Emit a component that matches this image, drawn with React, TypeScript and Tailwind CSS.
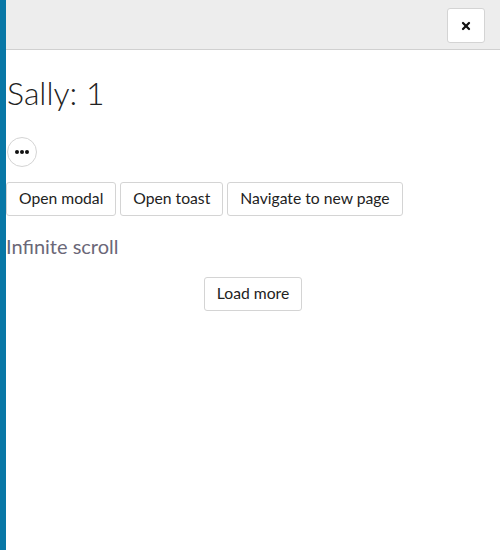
import { X } from "lucide-react";

const btn =
  "h-[34px] rounded-[3px] border border-[#d4d4d4] bg-white px-3 text-[15.7px] text-[#222]";

const App = () => {
  return (
    <div className="flex h-[550px] w-[500px] font-['Lato',sans-serif]">
      <div className="w-[6px] shrink-0 bg-[#0877a6]"></div>
      <div className="flex flex-1 flex-col">
        <div className="flex h-[50px] items-start justify-end border-b border-[#d0d0d0] bg-[#ededed] pt-2 pr-[15px]">
          <button className="flex h-[35px] w-[38px] items-center justify-center rounded-[3px] border border-[#d4d4d4] bg-white text-[#111]">
            <X size={12} strokeWidth={4.5} />
          </button>
        </div>

        <div className="flex flex-col pl-px">
          <h1 className="mt-[23px] text-[32px] font-light leading-[40px] text-[#222]">
            Sally: 1
          </h1>
          <button className="mt-[24px] flex h-[30px] w-[30px] items-center justify-center rounded-full border border-[#d4d4d4] bg-white">
            <span className="flex gap-[1.5px]">
              <span className="h-[3.5px] w-[3.5px] rounded-full bg-[#111]"></span>
              <span className="h-[3.5px] w-[3.5px] rounded-full bg-[#111]"></span>
              <span className="h-[3.5px] w-[3.5px] rounded-full bg-[#111]"></span>
            </span>
          </button>
        </div>

        <div className="mt-[15px] flex gap-1">
          <button className={btn}>Open modal</button>
          <button className={btn}>Open toast</button>
          <button className={btn}>Navigate to new page</button>
        </div>

        <div className="mt-[16px] text-[20px] leading-[28px] text-[#6b6878]">Infinite scroll</div>

        <div className="mt-[17px] flex justify-center">
          <button className={btn}>Load more</button>
        </div>
      </div>
    </div>
  );
};

export default App;
